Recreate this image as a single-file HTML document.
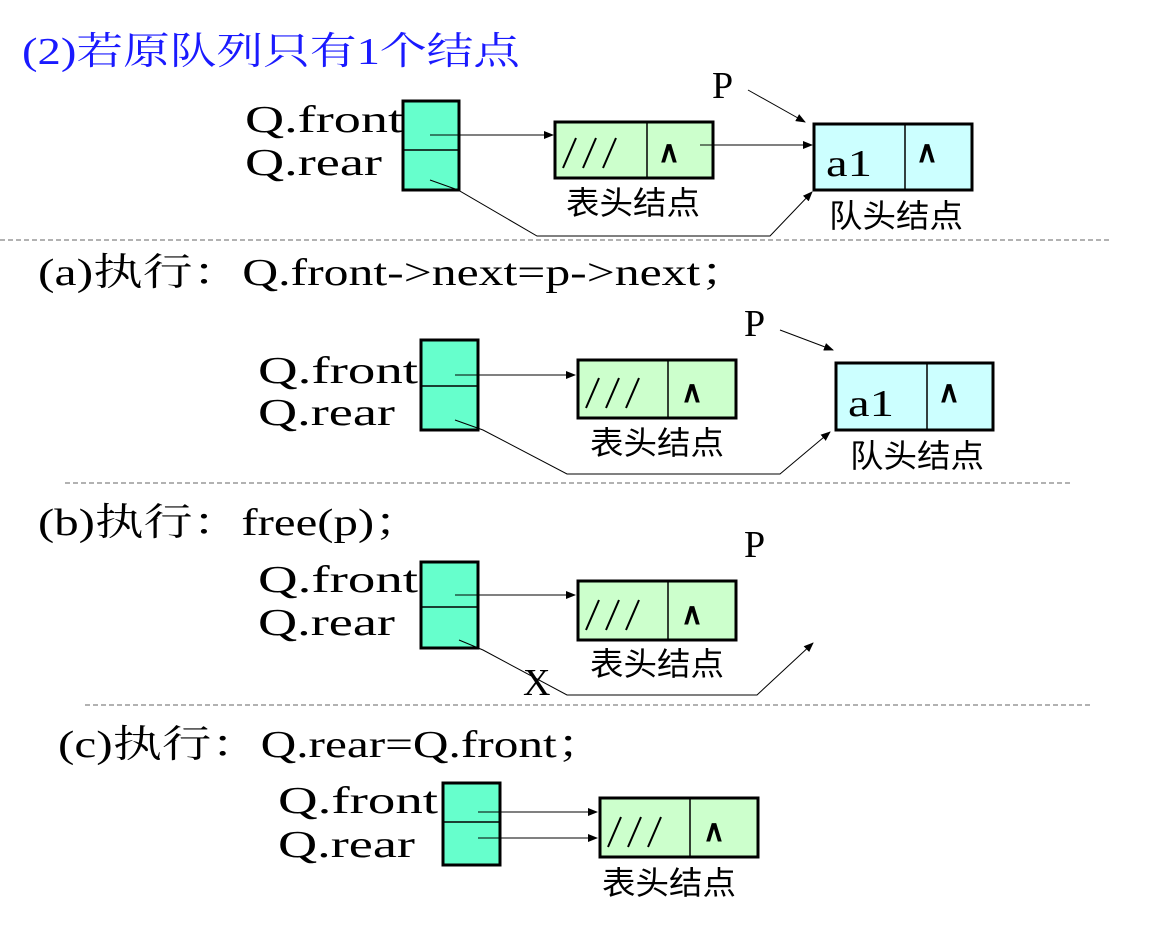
<!DOCTYPE html>
<html><head><meta charset="utf-8"><style>
html,body{margin:0;padding:0;background:#fff;}
svg{display:block}
.t{font-family:"Liberation Serif","Noto Serif CJK SC",serif;font-size:38px;fill:#000}
.c{font-family:"Noto Sans CJK SC","WenQuanYi Zen Hei",sans-serif;font-size:32px;fill:#000}
.n{font-family:"Liberation Sans",sans-serif;font-size:30px;font-weight:bold;fill:#000}
.sl{stroke:#000;stroke-width:2}
</style></head><body>
<svg width="1155" height="952" viewBox="0 0 1155 952" xmlns="http://www.w3.org/2000/svg">
<defs><marker id="a" markerWidth="10" markerHeight="8" refX="9" refY="4" orient="auto" markerUnits="userSpaceOnUse"><path d="M0,0 L10,4 L0,8z" fill="#000"/></marker></defs>
<text x="22" y="64" font-family="'Liberation Serif','Noto Serif CJK SC',serif" font-size="38" fill="#1a1aff" textLength="498" lengthAdjust="spacingAndGlyphs">(2)若原队列只有1个结点</text>

<!-- section 1 -->
<text class="t" x="245" y="132" textLength="158" lengthAdjust="spacingAndGlyphs">Q.front</text>
<text class="t" x="245" y="175" textLength="137" lengthAdjust="spacingAndGlyphs">Q.rear</text>
<rect x="403" y="101" width="56" height="89" fill="#66ffcc" stroke="#000" stroke-width="3"/>
<line x1="403" y1="150" x2="459" y2="150" stroke="#000" stroke-width="1.5"/>
<rect x="555" y="122" width="158" height="56" fill="#ccffcc" stroke="#000" stroke-width="3"/>
<line x1="647" y1="122" x2="647" y2="178" stroke="#000" stroke-width="1.5"/>
<path class="sl" d="M563,168 L576,138 M583,168 L596,138 M603,168 L616,138"/>
<text class="n" x="658" y="162">∧</text>
<text class="c" x="566" y="214" textLength="134" lengthAdjust="spacingAndGlyphs">表头结点</text>
<rect x="814" y="124" width="158" height="66" fill="#ccffff" stroke="#000" stroke-width="3"/>
<line x1="905" y1="124" x2="905" y2="190" stroke="#000" stroke-width="1.5"/>
<text class="t" x="826" y="176" textLength="46" lengthAdjust="spacingAndGlyphs">a1</text>
<text class="n" x="916" y="162">∧</text>
<text class="c" x="829" y="227" textLength="134" lengthAdjust="spacingAndGlyphs">队头结点</text>
<text class="t" x="712" y="98">P</text>
<line x1="430" y1="135" x2="553" y2="135" stroke="#000" marker-end="url(#a)"/>
<line x1="700" y1="145" x2="812" y2="145" stroke="#000" marker-end="url(#a)"/>
<line x1="748" y1="90" x2="805" y2="122" stroke="#000" marker-end="url(#a)"/>
<polyline points="430,180 458,190 537,236 770,236 812,192" fill="none" stroke="#000" marker-end="url(#a)"/>
<line x1="0" y1="240" x2="1110" y2="240" stroke="#666" stroke-dasharray="5,3"/>

<!-- section a -->
<text class="t" x="38" y="285" textLength="712" lengthAdjust="spacingAndGlyphs">(a)执行：Q.front-&gt;next=p-&gt;next；</text>
<text class="t" x="258" y="383" textLength="160" lengthAdjust="spacingAndGlyphs">Q.front</text>
<text class="t" x="258" y="425" textLength="137" lengthAdjust="spacingAndGlyphs">Q.rear</text>
<rect x="421" y="340" width="57" height="90" fill="#66ffcc" stroke="#000" stroke-width="3"/>
<line x1="421" y1="386" x2="478" y2="386" stroke="#000" stroke-width="1.5"/>
<rect x="578" y="360" width="158" height="58" fill="#ccffcc" stroke="#000" stroke-width="3"/>
<line x1="668" y1="360" x2="668" y2="418" stroke="#000" stroke-width="1.5"/>
<path class="sl" d="M586,408 L599,378 M606,408 L619,378 M626,408 L639,378"/>
<text class="n" x="681" y="402">∧</text>
<text class="c" x="590" y="454" textLength="134" lengthAdjust="spacingAndGlyphs">表头结点</text>
<rect x="836" y="363" width="157" height="67" fill="#ccffff" stroke="#000" stroke-width="3"/>
<line x1="927" y1="363" x2="927" y2="430" stroke="#000" stroke-width="1.5"/>
<text class="t" x="848" y="416" textLength="46" lengthAdjust="spacingAndGlyphs">a1</text>
<text class="n" x="938" y="402">∧</text>
<text class="c" x="850" y="467" textLength="134" lengthAdjust="spacingAndGlyphs">队头结点</text>
<text class="t" x="744" y="336">P</text>
<line x1="780" y1="330" x2="833" y2="350" stroke="#000" marker-end="url(#a)"/>
<line x1="455" y1="375" x2="575" y2="375" stroke="#000" marker-end="url(#a)"/>
<polyline points="455,420 483,430 567,474 780,474 830,432" fill="none" stroke="#000" marker-end="url(#a)"/>
<line x1="65" y1="483" x2="1070" y2="483" stroke="#666" stroke-dasharray="5,3"/>

<!-- section b -->
<text class="t" x="38" y="535" textLength="385" lengthAdjust="spacingAndGlyphs">(b)执行：free(p)；</text>
<text class="t" x="258" y="592" textLength="160" lengthAdjust="spacingAndGlyphs">Q.front</text>
<text class="t" x="258" y="635" textLength="137" lengthAdjust="spacingAndGlyphs">Q.rear</text>
<rect x="421" y="562" width="57" height="86" fill="#66ffcc" stroke="#000" stroke-width="3"/>
<line x1="421" y1="607" x2="478" y2="607" stroke="#000" stroke-width="1.5"/>
<rect x="578" y="581" width="158" height="59" fill="#ccffcc" stroke="#000" stroke-width="3"/>
<line x1="668" y1="581" x2="668" y2="640" stroke="#000" stroke-width="1.5"/>
<path class="sl" d="M586,630 L599,600 M606,630 L619,600 M626,630 L639,600"/>
<text class="n" x="681" y="624">∧</text>
<text class="c" x="590" y="675" textLength="134" lengthAdjust="spacingAndGlyphs">表头结点</text>
<text class="t" x="744" y="557">P</text>
<text class="t" x="523" y="695">X</text>
<line x1="455" y1="595" x2="575" y2="595" stroke="#000" marker-end="url(#a)"/>
<polyline points="459,640 483,650 567,695 757,695 813,643" fill="none" stroke="#000" marker-end="url(#a)"/>
<line x1="85" y1="705" x2="1090" y2="705" stroke="#666" stroke-dasharray="5,3"/>

<!-- section c -->
<text class="t" x="58" y="757" textLength="548" lengthAdjust="spacingAndGlyphs">(c)执行：Q.rear=Q.front；</text>
<text class="t" x="278" y="813" textLength="160" lengthAdjust="spacingAndGlyphs">Q.front</text>
<text class="t" x="278" y="857" textLength="137" lengthAdjust="spacingAndGlyphs">Q.rear</text>
<rect x="443" y="783" width="57" height="82" fill="#66ffcc" stroke="#000" stroke-width="3"/>
<line x1="443" y1="822" x2="500" y2="822" stroke="#000" stroke-width="1.5"/>
<rect x="600" y="798" width="158" height="59" fill="#ccffcc" stroke="#000" stroke-width="3"/>
<line x1="690" y1="798" x2="690" y2="857" stroke="#000" stroke-width="1.5"/>
<path class="sl" d="M608,847 L621,817 M628,847 L641,817 M648,847 L661,817"/>
<text class="n" x="703" y="841">∧</text>
<text class="c" x="602" y="894" textLength="134" lengthAdjust="spacingAndGlyphs">表头结点</text>
<line x1="478" y1="812" x2="597" y2="812" stroke="#000" marker-end="url(#a)"/>
<line x1="478" y1="838" x2="597" y2="838" stroke="#000" marker-end="url(#a)"/>
</svg>
</body></html>
